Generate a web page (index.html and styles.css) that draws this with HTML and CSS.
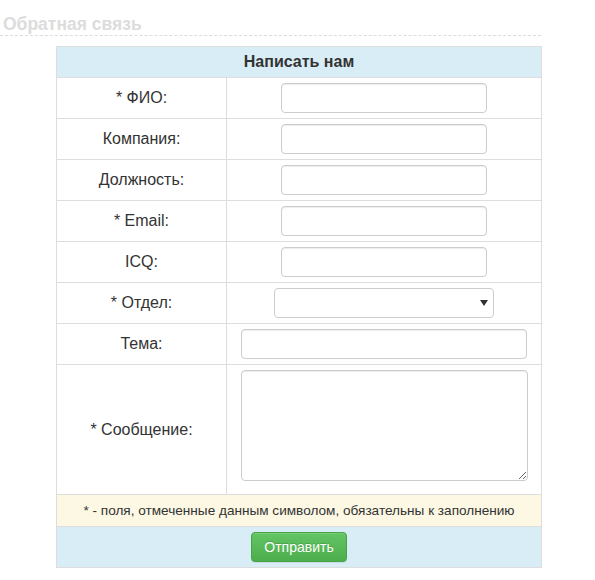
FILE: index.html
```html
<!DOCTYPE html>
<html lang="ru">
<head>
<meta charset="utf-8">
<link rel="stylesheet" href="styles.css">
</head>
<body>
<div class="page">
  <h2 class="title">Обратная связь</h2>
  <table class="form-table">
    <colgroup><col class="c-lbl"><col class="c-fld"></colgroup>
    <tr class="head"><th colspan="2">Написать нам</th></tr>
    <tr><td class="lbl">* ФИО:</td><td class="fld"><input class="inp" type="text"></td></tr>
    <tr><td class="lbl">Компания:</td><td class="fld"><input class="inp" type="text"></td></tr>
    <tr><td class="lbl">Должность:</td><td class="fld"><input class="inp" type="text"></td></tr>
    <tr><td class="lbl">* Email:</td><td class="fld"><input class="inp" type="text"></td></tr>
    <tr><td class="lbl">ICQ:</td><td class="fld"><input class="inp" type="text"></td></tr>
    <tr><td class="lbl">* Отдел:</td><td class="fld"><span class="sel-wrap"><select class="sel"><option></option></select></span></td></tr>
    <tr><td class="lbl">Тема:</td><td class="fld"><input class="inp wide" type="text"></td></tr>
    <tr class="msg"><td class="lbl">* Сообщение:</td><td class="fld"><textarea class="area"></textarea></td></tr>
    <tr class="note"><td colspan="2">* - поля, отмеченные данным символом, обязательны к заполнению</td></tr>
    <tr class="actions"><td colspan="2"><button class="btn" type="button">Отправить</button></td></tr>
  </table>
</div>
</body>
</html>
```

FILE: styles.css
```css
* { box-sizing: border-box; }
body {
  margin: 0;
  font-family: "Liberation Sans", Arial, sans-serif;
  font-size: 14px;
  color: #333;
  background: #fff;
}
.page {
  width: 541px;
}
.title {
  margin: 0;
  padding: 14px 0 0 3px;
  height: 36px;
  font-size: 17.5px;
  line-height: 20px;
  font-weight: bold;
  color: #dcdcdc;
  border-bottom: 1px dashed #dcdcdc;
}
.form-table {
  margin: 10px 0 0 56px;
  width: 486px;
  border-collapse: collapse;
  table-layout: fixed;
}
.c-lbl { width: 170px; }
.form-table th,
.form-table td {
  border: 1px solid #ddd;
  padding: 5px;
  text-align: center;
  vertical-align: middle;
}
.head th {
  background: #d9edf7;
  height: 31px;
  padding: 4px 5px;
  font-size: 16px;
  font-weight: bold;
  color: #333;
}
.lbl {
  height: 41px;
  font-size: 16px;
  line-height: 20px;
}
.fld {
  height: 41px;
}
.inp {
  display: block;
  margin: 0 auto;
  width: 206px;
  height: 30px;
  border: 1px solid #ccc;
  border-radius: 4px;
  box-shadow: inset 0 1px 1px rgba(0,0,0,.075);
  font: inherit;
  padding: 4px 8px;
  background: #fff;
}
.inp.wide {
  width: 286px;
}
.sel-wrap {
  position: relative;
  display: block;
  width: 220px;
  margin: 0 auto;
}
.sel-wrap::after {
  content: "";
  position: absolute;
  right: 6px;
  top: 12px;
  border-left: 4px solid transparent;
  border-right: 4px solid transparent;
  border-top: 6px solid #333;
  pointer-events: none;
}
.sel {
  display: block;
  width: 220px;
  height: 30px;
  -webkit-appearance: none;
  appearance: none;
  border: 1px solid #ccc;
  border-radius: 4px;
  background: #fff;
  font: inherit;
}
.msg td {
  height: 130px;
}
.area {
  display: block;
  margin: 0 auto;
  width: 287px;
  height: 111px;
  border: 1px solid #ccc;
  border-radius: 4px;
  box-shadow: inset 0 1px 1px rgba(0,0,0,.075);
  font: inherit;
  position: relative;
  top: -4px;
}
.note td {
  background: #fcf8e3;
  height: 32px;
  padding: 4px 5px;
  font-size: 13.6px;
}
.actions td {
  background: #d9edf7;
  height: 41px;
}
.btn {
  height: 30px;
  width: 96px;
  border: 1px solid #47a447;
  border-radius: 4px;
  background-image: linear-gradient(to bottom, #62c462 0, #4cae4c 100%);
  color: #fff;
  font-family: "Liberation Sans", Arial, sans-serif;
  font-size: 14px;
  text-shadow: 0 -1px 0 rgba(0,0,0,.15);
  box-shadow: inset 0 1px 0 rgba(255,255,255,.15), 0 1px 1px rgba(0,0,0,.075);
  padding: 0;
}
```
